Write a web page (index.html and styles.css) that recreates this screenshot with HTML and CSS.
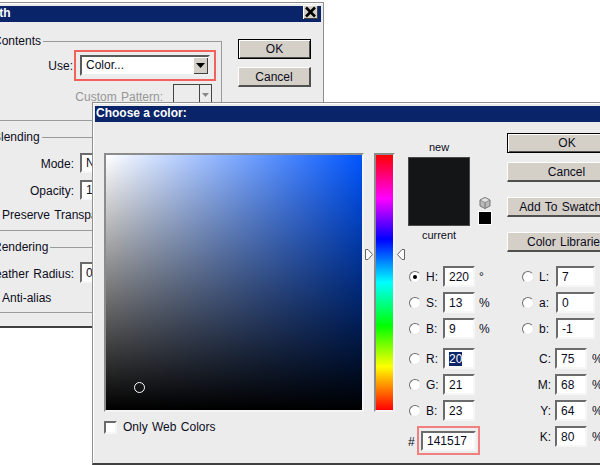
FILE: index.html
```html
<!DOCTYPE html>
<html lang="en">
<head>
<meta charset="utf-8">
<title>Choose a color</title>
<link rel="stylesheet" href="styles.css">
</head>
<body>
<section class="win win-back">
  <header class="title"><span class="title-text">Fill Path</span><span class="close"><svg width="13" height="12" viewBox="0 0 13 12"><path d="M2 1.5 L11 10.5 M11 1.5 L2 10.5" stroke="#000" stroke-width="2.6"/></svg></span></header>
  <div class="back-body">
    <div class="groups">
      <fieldset class="group g-contents">
        <legend>Contents</legend>
        <div class="line">
          <span class="lab">Use:</span>
          <span class="red-box"><span class="select"><span class="select-val">Color...</span><span class="select-btn"><svg width="9" height="5" viewBox="0 0 9 5"><path d="M0 0H9L4.5 5Z" fill="#000"/></svg></span></span></span>
        </div>
        <div class="line line-pattern">
          <span class="lab lab-wide off">Custom Pattern:</span>
          <span class="pattern"><span class="pattern-cell"></span><span class="pattern-btn"><svg width="7" height="4" viewBox="0 0 7 4"><path d="M0 0H7L3.5 4Z" fill="#888"/></svg></span></span>
        </div>
      </fieldset>
      <fieldset class="group g-blending">
        <legend>Blending</legend>
        <div class="line line-mode"><span class="lab lab-gap">Mode:</span><span class="field field-long f20">Normal</span></div>
        <div class="line line-opacity"><span class="lab lab-gap">Opacity:</span><span class="field field-long f20">100</span></div>
        <label class="check-line"><span class="check"></span>Preserve Transparency</label>
      </fieldset>
      <fieldset class="group g-rendering">
        <legend>Rendering</legend>
        <div class="line line-feather"><span class="lab lab-gap">Feather Radius:</span><span class="field field-long">0</span></div>
        <label class="check-line check-aa"><span class="check"></span>Anti-alias</label>
      </fieldset>
    </div>
    <div class="back-buttons">
      <button class="btn btn-default">OK</button>
      <button class="btn btn-second">Cancel</button>
    </div>
  </div>
</section>

<section class="win win-front">
  <header class="title"><span class="title-text">Choose a color:</span></header>
  <div class="front-body">
    <div class="picker">
      <div class="sb-field"><span class="marker"></span></div>
      <label class="web-only"><span class="check"></span>Only Web Colors</label>
    </div>
    <div class="hue">
      <div class="hue-bar"></div>
      <svg class="arrow arrow-l" width="8" height="11" viewBox="0 0 8 11"><path d="M.5 .5H3L7.5 5.5 3 10.5H.5Z" fill="#fff" stroke="#666"/></svg>
      <svg class="arrow arrow-r" width="8" height="11" viewBox="0 0 8 11"><path d="M7.5 .5H5L.5 5.5 5 10.5H7.5Z" fill="#fff" stroke="#666"/></svg>
    </div>
    <div class="side">
      <div class="side-top">
        <div class="preview">
          <span class="cap">new</span>
          <div class="swatch"></div>
          <span class="cap">current</span>
        </div>
        <div class="gamut">
          <svg width="12" height="12" viewBox="0 0 12 12"><path d="M6 .5 11 3V9L6 11.5 1 9V3Z" fill="#b9b9b9" stroke="#777"/><path d="M1 3 6 5.5 11 3 6 .5Z" fill="#e4e4e4" stroke="#777" stroke-width=".7"/><path d="M6 5.5V11.5" stroke="#777"/></svg>
          <span class="web-swatch"></span>
        </div>
        <div class="buttons">
          <button class="btn btn-default">OK</button>
          <button class="btn btn-second">Cancel</button>
          <button class="btn btn-third">Add To Swatches</button>
          <button class="btn btn-third">Color Libraries</button>
        </div>
      </div>
      <div class="values">
        <div class="col-hsb">
          <div class="row"><span class="radio on"></span><span class="k">H:</span><span class="field v">220</span><span class="u">°</span></div>
          <div class="row"><span class="radio"></span><span class="k">S:</span><span class="field v">13</span><span class="u">%</span></div>
          <div class="row row-sep"><span class="radio"></span><span class="k">B:</span><span class="field v">9</span><span class="u">%</span></div>
          <div class="row"><span class="radio"></span><span class="k">R:</span><span class="field v"><span class="sel">20</span></span></div>
          <div class="row"><span class="radio"></span><span class="k">G:</span><span class="field v">21</span></div>
          <div class="row"><span class="radio"></span><span class="k">B:</span><span class="field v">23</span></div>
          <div class="hex-row"><span class="hash">#</span><span class="hex-box"><span class="field hex">141517</span></span></div>
        </div>
        <div class="col-lab">
          <div class="row"><span class="radio"></span><span class="k2">L:</span><span class="field w">7</span></div>
          <div class="row"><span class="radio"></span><span class="k2">a:</span><span class="field w">0</span></div>
          <div class="row row-sep"><span class="radio"></span><span class="k2">b:</span><span class="field w">-1</span></div>
          <div class="row"><span class="k3">C:</span><span class="field c">75</span><span class="u2">%</span></div>
          <div class="row"><span class="k3">M:</span><span class="field c">68</span><span class="u2">%</span></div>
          <div class="row"><span class="k3">Y:</span><span class="field c">64</span><span class="u2">%</span></div>
          <div class="row"><span class="k3">K:</span><span class="field c">80</span><span class="u2">%</span></div>
        </div>
      </div>
    </div>
  </div>
</section>
</body>
</html>
```

FILE: styles.css
```css
* { box-sizing: border-box; }
html, body { margin: 0; height: 100%; }
body {
  position: relative;
  width: 600px;
  height: 465px;
  overflow: hidden;
  background: #fff;
  font: 12px/14px "Liberation Sans", Arial, sans-serif;
  word-spacing: 1px;
  color: #0c0c1c;
}

/* windows on the desktop */
.win {
  position: absolute;
  background: #ececec;
  border: 1px solid #8f8f8f;
  border-bottom: 2px solid #404040;
  box-shadow: inset 1px 1px 0 #fff;
  padding: 3px 0 0 2px;
  overflow: hidden;
}
.win-back { left: -60px; top: 2px; width: 384px; height: 326px; padding-right: 2px; }
.win-front { left: 92px; top: 102px; width: 540px; height: 363px; }

.title {
  display: flex;
  justify-content: space-between;
  align-items: flex-start;
  height: 16px;
  background: #0a246a;
  color: #fff;
  font-weight: bold;
  word-spacing: 0;
}
.title-text { line-height: 14px; }
.win-back .title { padding-left: 21px; padding-right: 3px; }
.win-front .title { padding-left: 1px; }
.close {
  display: flex;
  align-items: center;
  justify-content: center;
  width: 15px;
  height: 14px;
  margin-top: -1px;
  background: #d4d0c8;
  box-shadow: inset 1px 1px 0 #fff, inset -1px -1px 0 #404040;
}

/* shared controls */
.field {
  display: block;
  height: 21px;
  background: #fff;
  border: 2px solid;
  border-color: #6b6b6b #f6f6f6 #f6f6f6 #6b6b6b;
  padding: 2px 0 0 4px;
  line-height: 15px;
  white-space: nowrap;
  overflow: hidden;
}
.f20 { height: 20px; padding-top: 1px; }
.btn {
  display: block;
  width: 100%;
  height: 20px;
  padding: 0;
  background: #d4d0c8;
  border: 0;
  border-top: 1px solid #fff;
  border-left: 1px solid #fff;
  border-right: 2px solid #505050;
  border-bottom: 2px solid #505050;
  font: inherit;
  word-spacing: 1px;
  color: inherit;
}
.btn-default { border: 1px solid #000; box-shadow: inset 1px 1px 0 #fff, inset -1px -1px 0 #505050; }
.check {
  display: block;
  flex: none;
  width: 13px;
  height: 13px;
  background: #fff;
  border: 2px solid;
  border-color: #6b6b6b #f6f6f6 #f6f6f6 #6b6b6b;
}

/* back dialog */
.back-body { display: flex; padding: 12px 0 0 7px; }
.groups { width: 272px; flex: none; }
.group {
  margin: 0 0 9px;
  padding: 0;
  min-width: 0;
  border: 1px solid #9a9a9a;
}
.group legend { margin-left: 40px; padding: 0 2px; line-height: 14px; }
.g-contents { height: 87px; }
.g-blending { height: 101px; }
.g-rendering { height: 73px; }
.line { display: flex; align-items: center; }
.lab { width: 123px; padding: 2px 1px 0 0; flex: none; text-align: right; white-space: nowrap; }
.lab-gap { width: 123px; margin-right: 6px; padding-right: 0; }
.red-box {
  display: block;
  width: 142px;
  margin-top: 2px;
  padding: 3px 4px;
  border: 2px solid #f2625c;
}
.select {
  display: flex;
  height: 21px;
  background: #fff;
  border: 2px solid;
  border-color: #5a5a5a #efefef #efefef #5a5a5a;
}
.select-val { flex: 1; padding-left: 4px; line-height: 17px; }
.select-btn {
  display: flex;
  align-items: center;
  justify-content: center;
  width: 15px;
  background: #d4d0c8;
  box-shadow: inset 1px 1px 0 #fff, inset -1px -1px 0 #404040;
}
.line-pattern { margin-top: 3px; }
.lab-wide { width: 213px; margin-right: 9px; padding-top: 4px; }
.off { color: #969696; }
.pattern { display: flex; width: 39px; height: 21px; border: 1px solid #444; background: #ececec; }
.pattern-cell { flex: 1; border-right: 1px solid #444; }
.pattern-btn { display: flex; align-items: center; justify-content: center; width: 11px; }
.line-mode { margin-top: 9px; }
.line-opacity { margin-top: 7px; }
.field-long { width: 120px; }
.check-line { display: flex; align-items: center; gap: 5px; margin: 8px 0 0 33px; white-space: nowrap; }
.line-feather { margin-top: 8px; }
.check-aa { margin-top: 8px; }
.back-buttons { width: 73px; margin: 5px 0 0 16px; }
.back-buttons .btn { margin-bottom: 8px; }

/* front dialog */
.front-body { display: flex; align-items: flex-start; padding-left: 9px; }
.picker { width: 260px; flex: none; padding-top: 31px; }
.sb-field {
  position: relative;
  height: 259px;
  border: 2px solid;
  border-color: #8c8c8c #f4f4f4 #f4f4f4 #8c8c8c;
  background:
    linear-gradient(to top, #000, rgba(0, 0, 0, 0)),
    linear-gradient(to right, #fff, #0055ff);
}
.marker {
  position: absolute;
  left: 28px;
  top: 227px;
  width: 11px;
  height: 11px;
  border: 1px solid #fff;
  border-radius: 50%;
}
.web-only { display: flex; align-items: center; gap: 6px; margin-top: 8px; }
.hue { position: relative; width: 21px; margin: 31px 0 0 10px; flex: none; }
.hue-bar {
  height: 259px;
  border: 2px solid;
  border-color: #8c8c8c #f4f4f4 #f4f4f4 #8c8c8c;
  background: linear-gradient(to bottom, #f00, #f0f 17%, #00f 33%, #0ff 50%, #0f0 67%, #ff0 83%, #f00);
}
.arrow { position: absolute; top: 96px; }
.arrow-l { left: -9px; }
.arrow-r { left: 23px; }
.side { flex: none; width: 220px; margin-left: 13px; }
.side-top { display: flex; align-items: flex-start; height: 144px; padding-top: 11px; }
.preview { width: 62px; flex: none; margin-top: 7px; text-align: center; font-size: 11px; }
.cap { display: block; }
.swatch { height: 69px; margin: 3px 0 2px; background: #141517; border: 1px solid #4a4a4a; }
.gamut { width: 14px; flex: none; margin: 64px 0 0 8px; display: flex; flex-direction: column; align-items: center; gap: 2px; }
.web-swatch { display: block; width: 14px; height: 14px; background: #000; border: 1px solid #fff; }
.buttons { width: 120px; flex: none; margin-left: 15px; }
.buttons .btn-default { margin-bottom: 9px; }
.buttons .btn-second { margin-bottom: 15px; }
.buttons .btn-third { margin-bottom: 15px; }
.values { display: flex; }
.col-hsb { width: 114px; flex: none; padding-left: 1px; }
.col-lab { flex: none; }
.row { display: flex; align-items: center; height: 21px; margin-bottom: 5px; white-space: nowrap; }
.row-sep { margin-bottom: 9px; }
.radio {
  display: flex;
  align-items: center;
  justify-content: center;
  flex: none;
  width: 12px;
  height: 12px;
  background: #fff;
  border: 1px solid;
  border-color: #6f6f6f #e6e6e6 #e6e6e6 #6f6f6f;
  border-radius: 50%;
}
.radio.on::after { content: ""; width: 4px; height: 4px; border-radius: 50%; background: #000; }
.k { width: 22px; flex: none; padding-left: 5px; }
.k2 { width: 22px; flex: none; padding-left: 5px; }
.k3 { width: 33px; flex: none; text-align: right; padding-right: 4px; }
.v { width: 32px; }
.w { width: 39px; }
.c { width: 32px; }
.u { margin-left: 4px; }
.u2 { margin-left: 5px; }
.sel { background: #0a246a; color: #fff; }
.hex-row { display: flex; align-items: center; }
.hash { width: 8px; margin: 2px 0 0 -1px; flex: none; }
.hex-box { display: block; margin-left: 1px; padding: 3px 2px 2px; border: 2px solid #f08080; width: 63px; flex: none; }
.hex { height: 20px; padding-top: 1px; }
```
